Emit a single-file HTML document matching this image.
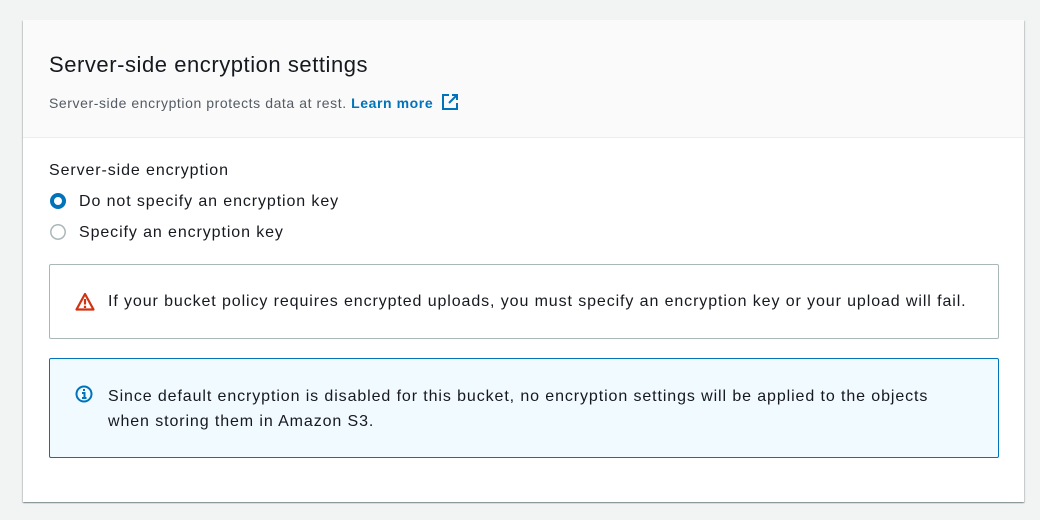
<!DOCTYPE html>
<html><head><meta charset="utf-8"><style>
*{box-sizing:border-box;margin:0;padding:0}
body{width:1040px;height:520px;background:#f2f3f3;font-family:"Liberation Sans",sans-serif;color:#16191f;position:relative;overflow:hidden}
.card{position:absolute;left:23px;top:20px;width:1001px;height:482px;background:#fff;box-shadow:0 1px 1px rgba(0,28,36,.3),1px 1px 1px rgba(0,28,36,.15),-1px 1px 1px rgba(0,28,36,.15)}
.head{height:118px;background:#fafafa;border-bottom:1px solid #eaeded;position:relative}
.t{position:absolute;left:26px;top:32px;font-size:22px;letter-spacing:0.55px}
.s{position:absolute;left:26px;top:73px;font-size:14px;color:#545b64;letter-spacing:0.58px}
.s b{color:#0073bb}
.abs{position:absolute;white-space:nowrap}
.f16{font-size:16px;letter-spacing:0.9px}
.box{position:absolute;left:26px;width:950px;border:1px solid #aab7b8;border-radius:2px}
</style></head><body>
<div class="card">
<div class="head">
<div class="t">Server-side encryption settings</div>
<div class="s">Server-side encryption protects data at rest. <b>Learn more</b>
<svg width="18" height="18" viewBox="0 0 18 18" style="vertical-align:-3px;margin-left:3px"><path d="M8 2H2v14h14v-6" fill="none" stroke="#0073bb" stroke-width="2"/><path d="M11 2h5v5M16 2L8 10" fill="none" stroke="#0073bb" stroke-width="2"/></svg></div>
</div>
<div class="abs f16" style="left:26px;top:142px">Server-side encryption</div>
<svg class="abs" style="left:27px;top:173px" width="16" height="16"><circle cx="8" cy="8" r="6" fill="none" stroke="#0073bb" stroke-width="4"/></svg>
<div class="abs f16" style="left:56px;top:173px">Do not specify an encryption key</div>
<svg class="abs" style="left:27px;top:204px" width="16" height="16"><circle cx="8" cy="8" r="7.2" fill="#fff" stroke="#aab7b8" stroke-width="1.5"/></svg>
<div class="abs f16" style="left:56px;top:204px">Specify an encryption key</div>
<div class="box" style="top:244px;height:75px">
<svg class="abs" style="left:25px;top:27px" width="20" height="19" viewBox="0 0 20 19"><path d="M10 2L1.5 17.5h17z" fill="none" stroke="#d13212" stroke-width="2.2" stroke-linejoin="round"/><path d="M10 7v5.5" stroke="#d13212" stroke-width="2.2"/><rect x="8.9" y="13.8" width="2.2" height="2.2" fill="#d13212"/></svg>
<div class="abs f16" style="left:58px;top:28px">If your bucket policy requires encrypted uploads, you must specify an encryption key or your upload will fail.</div>
</div>
<div class="box" style="top:338px;height:100px;background:#f1faff;border-color:#0073bb">
<svg class="abs" style="left:25px;top:26px" width="18" height="18" viewBox="0 0 18 18"><circle cx="9" cy="9" r="7.5" fill="none" stroke="#0073bb" stroke-width="2"/><rect x="8" y="4" width="2" height="2" fill="#0073bb"/><path d="M7 8h2.5v5M7 13h4.5" fill="none" stroke="#0073bb" stroke-width="2"/></svg>
<div class="abs f16" style="left:58px;top:25px;line-height:25px">Since default encryption is disabled for this bucket, no encryption settings will be applied to the objects<br>when storing them in Amazon S3.</div>
</div>
</div>
</body></html>
